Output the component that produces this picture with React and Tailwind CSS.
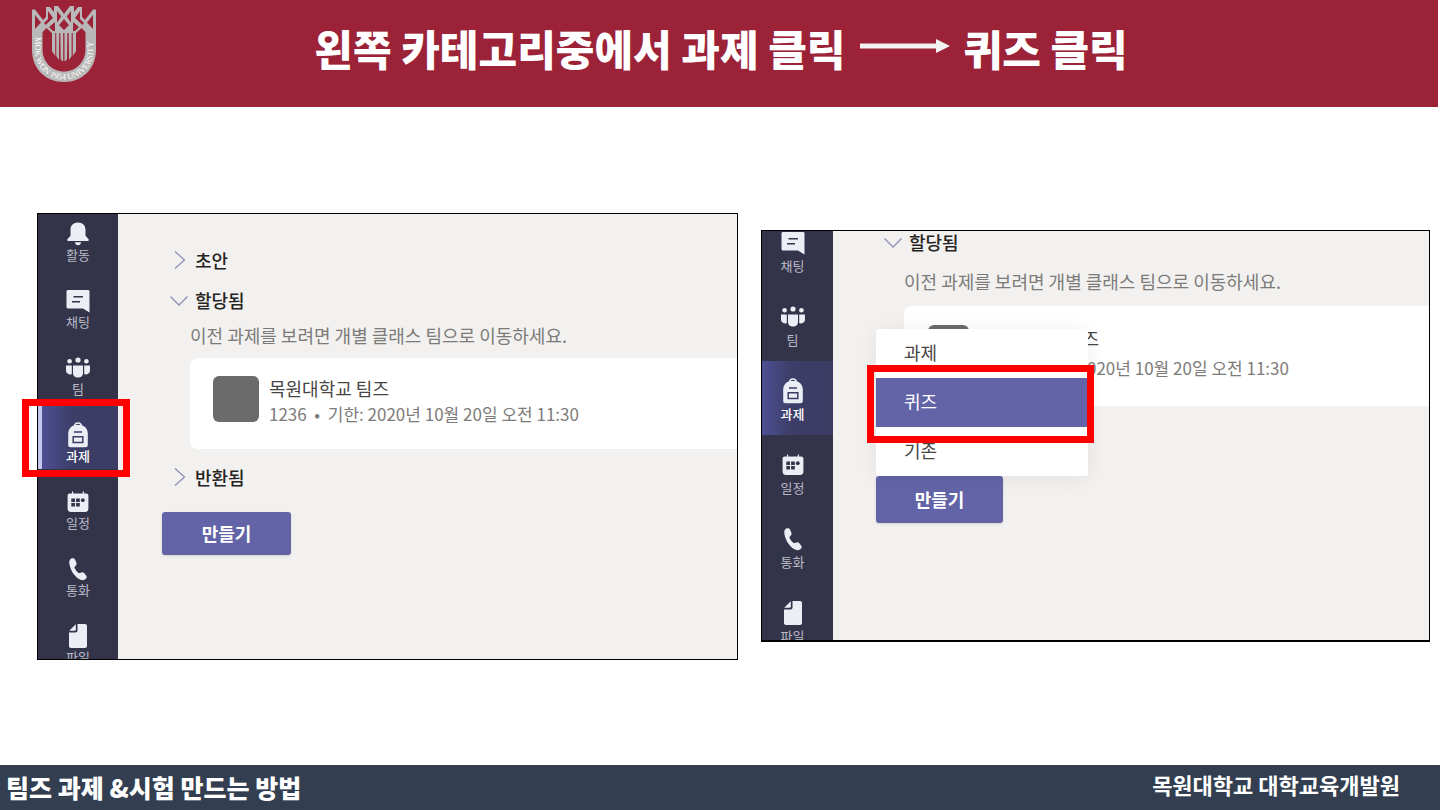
import React from "react";

const BellIcon = () => (
  <svg viewBox="0 0 24 24" className="size-6 shrink-0" fill="currentColor" aria-hidden="true">
    <path d="M12 0.500c4.500 0 7.500 3 7.500 7.200v6.100l2.900 3.200c.9 1 .3 2-.8 2H2.400c-1.100 0-1.700-1-.8-2l2.900-3.200V7.700C4.500 3.500 7.500.5 12 .5z" />
    <path d="M8.900 20.300h6.200c-.3 2-1.500 3-3.100 3s-2.800-1-3.100-3z" />
  </svg>
);

const ChatIcon = () => (
  <svg viewBox="0 0 24 24" className="size-6 shrink-0" aria-hidden="true">
    <path fill="currentColor" d="M2 1h20c1 0 1.500.6 1.500 1.500V23.500L17 19.500H2c-1 0-1.500-.6-1.500-1.500V2.500C.5 1.600 1 1 2 1z" />
    <path stroke="#33344a" strokeWidth="1.500" d="M7.500 7.800H17M6 12.800h8" />
  </svg>
);

const TeamIcon = () => (
  <svg viewBox="0 0 24 24" className="size-6 shrink-0" fill="currentColor" aria-hidden="true">
    <circle cx="12" cy="4" r="2.600" />
    <circle cx="3.600" cy="5.200" r="2.300" />
    <circle cx="20.400" cy="5.200" r="2.300" />
    <path d="M7 9.500h10v7.500c0 3-2.300 4.600-5 4.600S7 20 7 17zM0 9.500h5.800v8.800C2.500 18.800 0 17.300 0 14.500zM24 9.500h-5.800v8.800c3.300.5 5.800-1 5.800-3.800z" />
  </svg>
);

const BackpackIcon = () => (
  <svg viewBox="0 0 24 26" className="h-[26px] w-6 shrink-0" aria-hidden="true">
    <path fill="none" stroke="currentColor" strokeWidth="1.500" d="M8.500 3.800C9 1.800 10.300 1 12 1s3 .8 3.500 2.800" />
    <path fill="currentColor" d="M9 3h6c4.300 1 6.800 4.500 6.800 9v10.800c0 1.800-.8 2.500-2.500 2.500H4.700c-1.700 0-2.500-.7-2.500-2.500V12C2.200 7.500 4.700 4 9 3z" />
    <path fill="none" stroke="#3b3c66" strokeWidth="1.500" d="M8 10h8M7.200 14.800h9.600v5.700H7.200z" />
  </svg>
);

const CalendarIcon = () => (
  <svg viewBox="0 0 24 24" className="size-6 shrink-0" aria-hidden="true">
    <path fill="currentColor" d="M6 1.500h1.200v2h9.600v-2H18v2h2.200c1.400 0 2.200.8 2.200 2v13c0 2.300-1.200 3.500-3.200 3.500H4.800c-2 0-3.200-1.200-3.200-3.500v-13c0-1.200.8-2 2.200-2H6z" />
    <path fill="#33344a" d="M5.300 8.500h3.700V12H5.300zM10.100 8.500h3.700V12h-3.700zM5.300 13h3.700v3.500H5.300zM10.100 13h3.700v3.500h-3.700z" />
    <circle cx="16.800" cy="10.200" r="1.900" fill="#33344a" />
  </svg>
);

const PhoneIcon = () => (
  <svg viewBox="0 0 24 24" className="size-6 shrink-0" fill="currentColor" aria-hidden="true">
    <path d="M5.200 1.600C6.500.8 8.300 1 9 2.500l1.300 2.900c.5 1.200.3 2.200-.5 3.100L8.700 9.700c-.3.400-.3.900 0 1.500.9 1.800 2 3.300 3.500 4.600.5.400 1 .5 1.500.3l1.900-.6c1-.3 2-.1 2.700.7l1.800 2.200c1 1.200.8 2.600-.5 3.600-1.900 1.500-4.300 1.600-6.600.1C7.800 18.700 4.300 13 3.300 6.300 3 4.200 3.600 2.600 5.200 1.600z" />
  </svg>
);

const FileIcon = () => (
  <svg viewBox="0 0 24 24" className="size-6 shrink-0" fill="currentColor" aria-hidden="true">
    <path d="M11.500 0H19c1.200 0 2 .8 2 2v20c0 1.200-.8 2-2 2H5c-1.200 0-2-.8-2-2V8.500h6.500c1.300 0 2-.7 2-2z" />
    <path d="M9.800.3v5.300c0 .8-.4 1.200-1.200 1.200H3.200z" />
  </svg>
);

const NAV = [
  { label: "활동", Icon: BellIcon },
  { label: "채팅", Icon: ChatIcon },
  { label: "팀", Icon: TeamIcon },
  { label: "과제", Icon: BackpackIcon, active: true },
  { label: "일정", Icon: CalendarIcon },
  { label: "통화", Icon: PhoneIcon },
  { label: "파일", Icon: FileIcon },
];

function Sidebar({ items, className, itemClass, activeClass = "", labelClass }) {
  return (
    <nav className={`shrink-0 bg-[#33344a] ${className}`}>
      {items.map(({ label, Icon, active }) => (
        <a
          key={label}
          href="#"
          className={`flex flex-col items-center text-[13px] leading-[18px] ${itemClass} ${
            active
              ? `bg-linear-to-r from-[#4d4f94] via-[#3d3e68] via-40% to-[#3b3c62] font-medium text-white ${activeClass}`
              : "text-[#b9bac6]"
          }`}
        >
          <span className="flex h-6 items-center text-[#eceef6]">
            <Icon />
          </span>
          <span className={labelClass}>{label}</span>
        </a>
      ))}
    </nav>
  );
}

function Section({ label, open, className = "" }) {
  return (
    <button type="button" className={`flex items-center gap-1.5 text-lg font-medium text-[#252423] ${className}`}>
      <svg viewBox="0 0 20 20" className="size-5" fill="none" stroke="#8f8fb8" strokeWidth="1.300" aria-hidden="true">
        <path d={open ? "M1.500 6.500l8.500 8.500 8.500-8.500" : "M6 1.500l9.500 8.500L6 18.500"} />
      </svg>
      {label}
    </button>
  );
}

function Crest() {
  return (
    <svg viewBox="0 0 66 77" className="h-[77px] w-[66px]" role="img" aria-label="MOKWON UNIVERSITY">
      <path
        fill="#b8b8b8"
        d="M0 22h10.500v21c0 13 9.500 22.500 21.500 22.500S53.500 56 53.500 43V22H64v22c0 19-14 32-32 32S0 63 0 44z"
      />
      <path
        fill="#b8b8b8"
        d="M0 3.500h3L11 14l3-3V1h4l4 5V0h4l6 8 6-8h4v6l4-5h4v10l3 3 8-10.500h3V26H53.500l-4-4-5.500 5H20l-5.500-5-4 4H0z"
      />
      <g fill="#9c2238">
        <path d="M3 9l6 7.500L3 23zM16 5l5 7-7.500 7-1.500-2 4-4zM23 16l-6 5 5 5h1zM25 5l5 6.500-5 6zM32 12l5 7-5 5-5-5z" />
        <path d="M61 9l-6 7.500L61 23zM48 5l-5 7 7.500 7 1.500-2-4-4zM41 16l6 5-5 5h-1zM39 5l-5 6.500 5 6z" />
      </g>
      <path fill="#b8b8b8" d="M30.500 9h3l8 11-2 2-7.500-9-7.500 9-2-2z" />
      <g fill="#b8b8b8">
        <path d="M20 25h3.200v25L20 45zM24.300 24h2.900l-.3 30-2.600-4zM28.300 24h2.900v31.500l-2.500-2zM32.500 24h2.900l-.4 29.500-2.500 2zM36.700 24h2.900v26l-2.600 4zM40.800 25H44v20l-3.200 5z" />
      </g>
      <path id="crest-ring" fill="none" d="M2.800 31v13C2.800 62 16 73.500 32 73.500S61.200 62 61.200 44V24" />
      <text fontFamily="Liberation Serif, serif" fontSize="8.500" fill="#ffffff">
        <textPath href="#crest-ring">MOK WON 1954 UNIVERSITY</textPath>
      </text>
    </svg>
  );
}

export default function App() {
  return (
    <div className="flex min-h-screen flex-col bg-white font-['Noto_Sans_CJK_KR',sans-serif]">
      <header className="mr-0.5 grid h-[107px] grid-cols-[1fr_auto_1fr] items-start bg-[#9c2238] pl-8">
        <div className="pt-1.5">
          <Crest />
        </div>
        <h1 className="-ml-7 flex items-center gap-3.5 pt-[18px] text-[42px] leading-[60px] font-black whitespace-nowrap text-white">
          왼쪽 카테고리중에서 과제 클릭
          <svg viewBox="0 0 90 14" className="-mt-1 h-3.5 w-[90px]" fill="#f2f2f2" aria-hidden="true">
            <path d="M0 4.500h76V0l14 7-14 7V9.500H0z" />
          </svg>
          퀴즈 클릭
        </h1>
      </header>

      <main className="flex flex-1 items-start gap-[23px] pr-2.5 pb-10 pl-[37px]">
        <section className="relative mt-[106px] min-w-0 flex-[701]">
          <div className="flex h-[447px] overflow-hidden border border-black bg-[#f2f1ef]">
            <Sidebar
              items={NAV}
              className="-mt-[13px] w-20"
              itemClass="h-[67px] pt-[21px]"
              activeClass="border-l-4 border-[#c5c6ee] pr-1"
              labelClass=""
            />
            <div className="flex min-w-0 flex-1 flex-col items-start pt-[26px]">
              <Section label="초안" className="ml-[51px] h-10" />
              <Section label="할당됨" open className="ml-[51px] h-10" />
              <p className="ml-[72px] text-lg leading-[30px] whitespace-nowrap text-[#7d7b79]">
                이전 과제를 보려면 개별 클래스 팀으로 이동하세요.
              </p>
              <article className="mt-2 ml-[72px] flex h-[91px] gap-2.5 self-stretch rounded-l-lg bg-white pt-[18px] pl-[23px]">
                <div className="size-[46px] shrink-0 rounded-md bg-[#6b6b6b]" />
                <div className="-mt-px text-lg leading-[26px] whitespace-nowrap">
                  <h2 className="text-[#484644]">목원대학교 팀즈</h2>
                  <p className="text-[17px] text-[#7d7b79]">1236 &nbsp;•&nbsp; 기한: 2020년 10월 20일 오전 11:30</p>
                </div>
              </article>
              <Section label="반환됨" className="mt-2 ml-[51px] h-10" />
              <button
                type="button"
                className="mt-[15px] ml-11 h-[43px] w-[129px] rounded-[3px] bg-[#6264a7] pb-0.5 text-lg font-bold text-white shadow-sm"
              >
                만들기
              </button>
            </div>
          </div>
          <div className="pointer-events-none absolute top-[186px] -left-[15px] h-[78px] w-[108px] border-7 border-[#ff0000]" />
        </section>

        <section className="relative mt-[123px] min-w-0 flex-[669]">
          <div className="flex h-[412px] overflow-hidden border border-b-2 border-black bg-[#f2f1ef]">
            <Sidebar
              items={NAV.slice(1)}
              className="-mt-[18px] w-[71px]"
              itemClass="h-[74px] pt-[18px] pr-2.5"
              labelClass="mt-0.5"
            />
            <div className="flex min-w-0 flex-1 flex-col items-start">
              <Section label="할당됨" open className="ml-[50px] h-[22px]" />
              <p className="mt-[13px] ml-[71px] text-lg leading-[30px] whitespace-nowrap text-[#7d7b79]">
                이전 과제를 보려면 개별 클래스 팀으로 이동하세요.
              </p>
              <article className="mt-2.5 ml-[71px] flex h-[100px] gap-2.5 self-stretch rounded-l-lg bg-white pt-[19px] pl-6">
                <div className="h-10 w-[41px] shrink-0 rounded-md bg-[#6b6b6b]" />
                <div className="-mt-px text-lg leading-[29px] whitespace-nowrap">
                  <h2 className="text-[#484644]">목원대학교 팀즈</h2>
                  <p className="text-[17px] text-[#7d7b79]">1236 &nbsp;•&nbsp; 기한: 2020년 10월 20일 오전 11:30</p>
                </div>
              </article>
              <div className="relative mt-[70px] ml-[43px]">
                <button
                  type="button"
                  className="h-[47px] w-[127px] rounded-[3px] bg-[#6264a7] pb-0.5 text-lg font-bold text-white shadow-sm"
                >
                  만들기
                </button>
                <div
                  role="menu"
                  className="absolute bottom-full left-0 flex w-[212px] flex-col rounded-[3px] bg-white text-lg text-[#484644] shadow-[0_2px_20px_rgba(0,0,0,0.07)]"
                >
                  <button type="button" role="menuitem" className="h-[49px] px-7 pb-1 text-left">과제</button>
                  <button type="button" role="menuitem" className="h-[49px] bg-[#6264a7] px-7 pb-1 text-left text-white">퀴즈</button>
                  <button type="button" role="menuitem" className="h-[49px] px-7 pb-1 text-left">기존</button>
                </div>
              </div>
            </div>
          </div>
          <div className="pointer-events-none absolute top-[135px] left-[106px] h-[78px] w-[227px] border-7 border-[#ff0000]" />
        </section>
      </main>

      <footer className="flex h-[45px] items-center justify-between bg-[#333f50] pr-10 pl-1.5 text-white">
        <p className="text-[25px] font-black">팀즈 과제 &amp;시험 만드는 방법</p>
        <p className="pb-1.5 text-[22px] font-bold">목원대학교 대학교육개발원</p>
      </footer>
    </div>
  );
}
